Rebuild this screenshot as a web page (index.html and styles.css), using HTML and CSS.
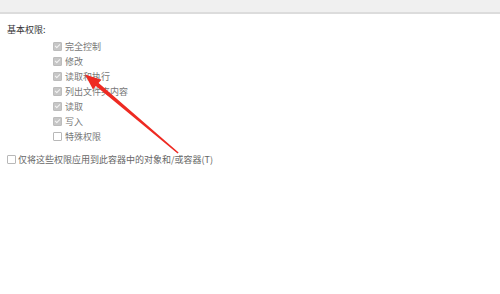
FILE: index.html
```html
<!DOCTYPE html>
<html lang="zh-CN">
<head>
    <meta charset="UTF-8">
    <title>权限</title>
    <link rel="stylesheet" href="styles.css">
</head>
<body>
    <div class="topbar"></div>

    <div class="panel">
        <div class="heading">基本权限:</div>

        <ul class="perms">
            <li><span class="box checked"></span>完全控制</li>
            <li><span class="box checked"></span>修改</li>
            <li><span class="box checked"></span>读取和执行</li>
            <li><span class="box checked"></span>列出文件夹内容</li>
            <li><span class="box checked"></span>读取</li>
            <li><span class="box checked"></span>写入</li>
            <li><span class="box"></span>特殊权限</li>
        </ul>

        <div class="apply"><span class="box"></span>仅将这些权限应用到此容器中的对象和/或容器(T)</div>
    </div>

    <svg class="arrow" width="500" height="294" viewBox="0 0 500 294">
        <polygon points="85,74.5 101.4,79.8 98.6,83 178.6,152.5 177.6,153.6 95.8,86 93,89.4" fill="#ee2a22"/>
    </svg>
</body>
</html>
```

FILE: styles.css
```css
body {
    margin: 0;
    background-color: #fff;
    font-family: "Noto Sans CJK SC", "Microsoft YaHei", sans-serif;
    font-size: 9px;
    color: #555;
    position: relative;
    width: 500px;
    height: 294px;
    overflow: hidden;
}
.topbar {
    height: 12px;
    background-color: #f0f0f0;
    border-bottom: 2px solid #dcdcdc;
}
.panel {
    padding-left: 7px;
    padding-top: 8px;
}
.heading {
    color: #333;
    line-height: 16px;
}
.perms {
    list-style: none;
    margin: 1px 0 0 46px;
    padding: 0;
}
.perms li {
    display: flex;
    align-items: center;
    height: 15px;
    color: #777;
}
.box {
    display: inline-block;
    width: 7px;
    height: 7px;
    border: 1px solid #b8b8b8;
    border-radius: 1px;
    background-color: #fff;
    margin-right: 3px;
    position: relative;
}
.box.checked {
    background-color: #c6c6c6;
    border-color: #bcbcbc;
}
.box.checked::after {
    content: "";
    position: absolute;
    left: 2px;
    top: 0px;
    width: 2px;
    height: 4px;
    border: solid #f4f4f4;
    border-width: 0 1px 1px 0;
    transform: rotate(45deg);
}
.apply {
    display: flex;
    align-items: center;
    height: 15px;
    margin-top: 8px;
    color: #666;
}
.apply .box {
    margin-right: 2px;
}
.arrow {
    position: absolute;
    left: 0;
    top: 0;
}
```
